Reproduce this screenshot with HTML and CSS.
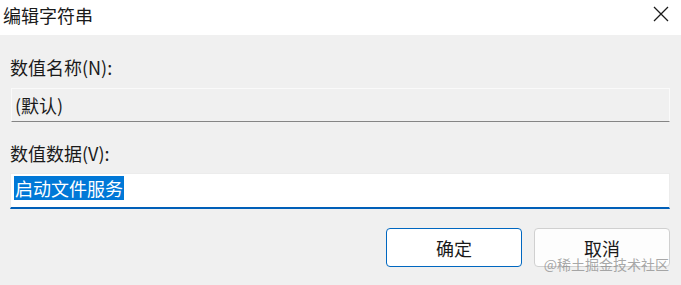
FILE: index.html
```html
<!DOCTYPE html>
<html lang="zh">
<head>
<meta charset="utf-8">
<link rel="stylesheet" href="styles.css">
</head>
<body>
<div class="dialog">
  <div class="titlebar">
    <span class="title">编辑字符串</span>
    <svg class="close" width="16" height="16" viewBox="0 0 16 16"><path d="M1 1 L15 15 M15 1 L1 15" stroke="#1a1a1a" stroke-width="1.3" fill="none"/></svg>
  </div>
  <div class="body">
    <div class="label label-first">数值名称(N):</div>
    <div class="field field-ro"><span class="val">(默认)</span></div>
    <div class="label label-second">数值数据(V):</div>
    <div class="field field-edit"><span class="sel">启动文件服务</span></div>
    <div class="buttons">
      <div class="btn btn-primary">确定</div>
      <div class="btn">取消</div>
    </div>
  </div>
  <div class="watermark">@稀土掘金技术社区</div>
</div>
</body>
</html>
```
FILE: styles.css
```css
html, body {
  margin: 0;
  padding: 0;
  background: #f0f0f0;
}
.dialog {
  position: relative;
  width: 681px;
  height: 285px;
  overflow: hidden;
  font-family: "Noto Sans CJK SC", "Noto Sans", sans-serif;
  color: #1b1b1b;
}
.titlebar {
  height: 35px;
  background: #ffffff;
  display: flex;
  justify-content: space-between;
  align-items: flex-start;
}
.title {
  font-size: 18px;
  line-height: 30px;
  padding-left: 3px;
  color: #1a1a1a;
}
.close {
  margin-top: 6px;
  margin-right: 12px;
}
.body {
  padding: 0 11px 0 10px;
}
.label {
  font-size: 18px;
  line-height: 24px;
  color: #1a1a1a;
}
.label-first {
  margin-top: 20px;
}
.label-second {
  margin-top: 19px;
}
.field {
  box-sizing: border-box;
  display: flex;
  font-size: 18px;
}
.field-ro {
  margin-top: 9px;
  margin-left: 1px;
  height: 34px;
  align-items: center;
  border: 1px solid #fafafa;
  border-bottom: 1px solid #858585;
  background: #f0f0f0;
  padding-left: 3px;
  color: #1a1a1a;
}
.field-edit {
  margin-top: 8px;
  height: 36px;
  align-items: flex-start;
  background: #ffffff;
  border: 1px solid #ececec;
  border-bottom: 2px solid #005fb8;
  padding-left: 3px;
  padding-top: 2px;
}
.sel {
  background: #0078d7;
  color: #ffffff;
  line-height: 24px;
  padding: 0 1px;
}
.buttons {
  display: flex;
  justify-content: flex-end;
  gap: 12px;
  margin-top: 19px;
}
.btn {
  box-sizing: border-box;
  width: 136px;
  height: 39px;
  border: 1px solid #d0d0d0;
  border-radius: 4px;
  background: #fdfdfd;
  font-size: 18px;
  display: flex;
  align-items: center;
  justify-content: center;
  color: #1a1a1a;
}
.btn-primary {
  border-color: #0067c0;
  background: #ffffff;
}
.watermark {
  position: absolute;
  right: 12px;
  top: 254px;
  font-size: 14px;
  line-height: 20px;
  color: rgba(140, 140, 140, 0.75);
}
```
